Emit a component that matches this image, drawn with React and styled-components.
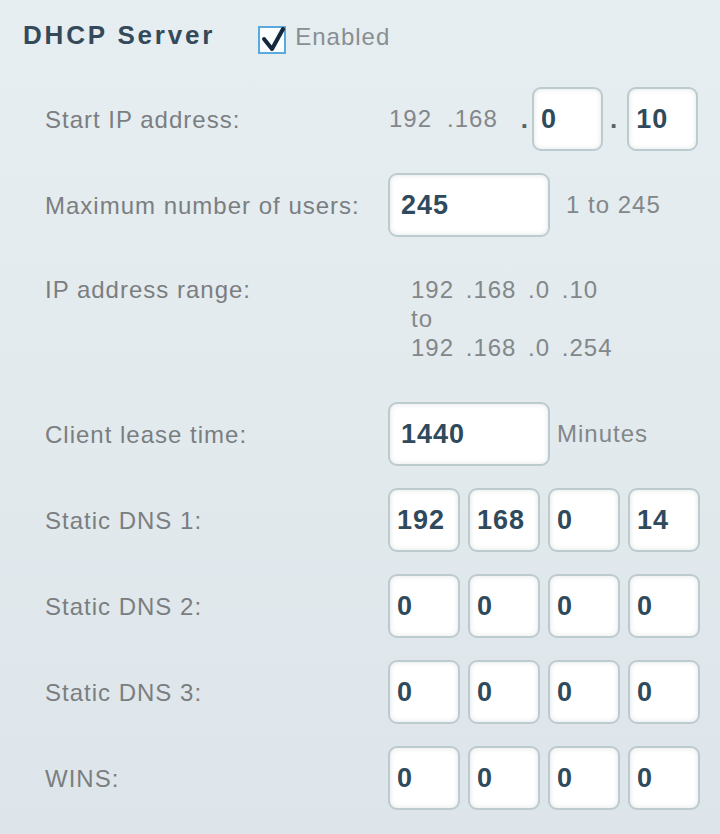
import React from "react";
import styled, { createGlobalStyle } from "styled-components";

const Global = createGlobalStyle`
  html, body {
    margin: 0;
    padding: 0;
  }
  body {
    background: linear-gradient(180deg, #e6eef2 0%, #e2eaee 50%, #dde5ea 100%);
    font-family: "Liberation Sans", Arial, sans-serif;
    min-height: 834px;
  }
`;

const Panel = styled.div`
  width: 720px;
  height: 834px;
  box-sizing: border-box;
  padding: 19px 0 0 0;
  display: flex;
  flex-direction: column;
`;

const Header = styled.div`
  display: flex;
  align-items: center;
  padding-left: 23px;
  height: 32px;
`;

const Title = styled.h2`
  margin: 0;
  font-size: 26px;
  font-weight: bold;
  letter-spacing: 2.8px;
  color: #34495a;
  line-height: 32px;
`;

const CheckLabel = styled.label`
  display: flex;
  align-items: center;
  margin-left: 43px;
  margin-top: 4px;
  gap: 9px;
  font-size: 24px;
  letter-spacing: 1px;
  color: #898e91;
`;

const CheckBox = styled.span`
  position: relative;
  width: 28px;
  height: 28px;
  box-sizing: border-box;
  border: 2px solid #5aa9dc;
  background: #fbfdfe;
  margin-top: 6px;

  svg {
    position: absolute;
    left: -2px;
    top: -2px;
  }
`;

const Form = styled.div`
  display: flex;
  flex-direction: column;
  gap: 22px;
  padding-left: 45px;
  margin-top: 36px;
`;

const Row = styled.div`
  display: flex;
  align-items: ${({ $top }) => ($top ? "flex-start" : "center")};
  min-height: 64px;
  padding: ${({ $top }) => ($top ? "16px 0 18px" : "0")};
`;

const Label = styled.div`
  width: 343px;
  flex: none;
  font-size: 24px;
  letter-spacing: 1px;
  color: #7b7e80;
  line-height: 29px;
`;

const Fields = styled.div`
  display: flex;
  align-items: center;
  gap: ${({ $gap }) => $gap ?? 0}px;
`;

const Box = styled.input`
  width: ${({ $w }) => $w}px;
  height: 64px;
  box-sizing: border-box;
  border: 2px solid #bccbce;
  border-radius: 9px;
  background: #ffffff;
  box-shadow: inset 0 0 5px rgba(120, 140, 150, 0.24);
  padding: 0 0 0 ${({ $pad }) => $pad ?? 7}px;
  font-family: "Liberation Sans", Arial, sans-serif;
  font-size: 27px;
  font-weight: bold;
  letter-spacing: 1px;
  color: #2f4a5c;
  outline: none;
`;

const Plain = styled.span`
  font-size: 24px;
  letter-spacing: 1px;
  color: #838789;
  margin: ${({ $m }) => $m ?? "0"};
`;

const Dot = styled.span`
  font-size: 26px;
  font-weight: bold;
  color: #5b6266;
  margin: ${({ $m }) => $m ?? "0"};
`;

const Range = styled.div`
  padding-left: 23px;
  font-size: 24px;
  letter-spacing: 1px;
  line-height: 29px;
  color: #838789;
  word-spacing: 4px;
`;

const Check = () => (
  <svg width="30" height="30" viewBox="0 0 30 30">
    <path
      d="M6 13 L14 23 L25 3"
      fill="none"
      stroke="#15273a"
      strokeWidth="4"
      strokeLinecap="round"
      strokeLinejoin="round"
    />
  </svg>
);

const Quad = ({ values }) => (
  <Fields $gap={8}>
    {values.map((v, i) => (
      <Box key={i} $w={72} readOnly value={v} />
    ))}
  </Fields>
);

export default function App() {
  return (
    <>
      <Global />
      <Panel>
        <Header>
          <Title>DHCP Server</Title>
          <CheckLabel>
            <CheckBox>
              <Check />
            </CheckBox>
            Enabled
          </CheckLabel>
        </Header>
        <Form>
          <Row>
            <Label>Start IP address:</Label>
            <Fields>
              <Plain $m="0 15px 0 1px">192</Plain>
              <Plain>.168</Plain>
              <Dot $m="0 4px 0 23px">.</Dot>
              <Box $w={71} readOnly value="0" />
              <Dot $m="0 10px 0 7px">.</Dot>
              <Box $w={71} readOnly value="10" />
            </Fields>
          </Row>
          <Row>
            <Label>Maximum number of users:</Label>
            <Fields $gap={16}>
              <Box $w={162} $pad={11} readOnly value="245" />
              <Plain>1 to 245</Plain>
            </Fields>
          </Row>
          <Row $top>
            <Label>IP address range:</Label>
            <Range>
              <div>192 .168 .0 .10</div>
              <div>to</div>
              <div>192 .168 .0 .254</div>
            </Range>
          </Row>
          <Row>
            <Label>Client lease time:</Label>
            <Fields $gap={7}>
              <Box $w={162} $pad={11} readOnly value="1440" />
              <Plain>Minutes</Plain>
            </Fields>
          </Row>
          <Row>
            <Label>Static DNS 1:</Label>
            <Quad values={["192", "168", "0", "14"]} />
          </Row>
          <Row>
            <Label>Static DNS 2:</Label>
            <Quad values={["0", "0", "0", "0"]} />
          </Row>
          <Row>
            <Label>Static DNS 3:</Label>
            <Quad values={["0", "0", "0", "0"]} />
          </Row>
          <Row>
            <Label>WINS:</Label>
            <Quad values={["0", "0", "0", "0"]} />
          </Row>
        </Form>
      </Panel>
    </>
  );
}
